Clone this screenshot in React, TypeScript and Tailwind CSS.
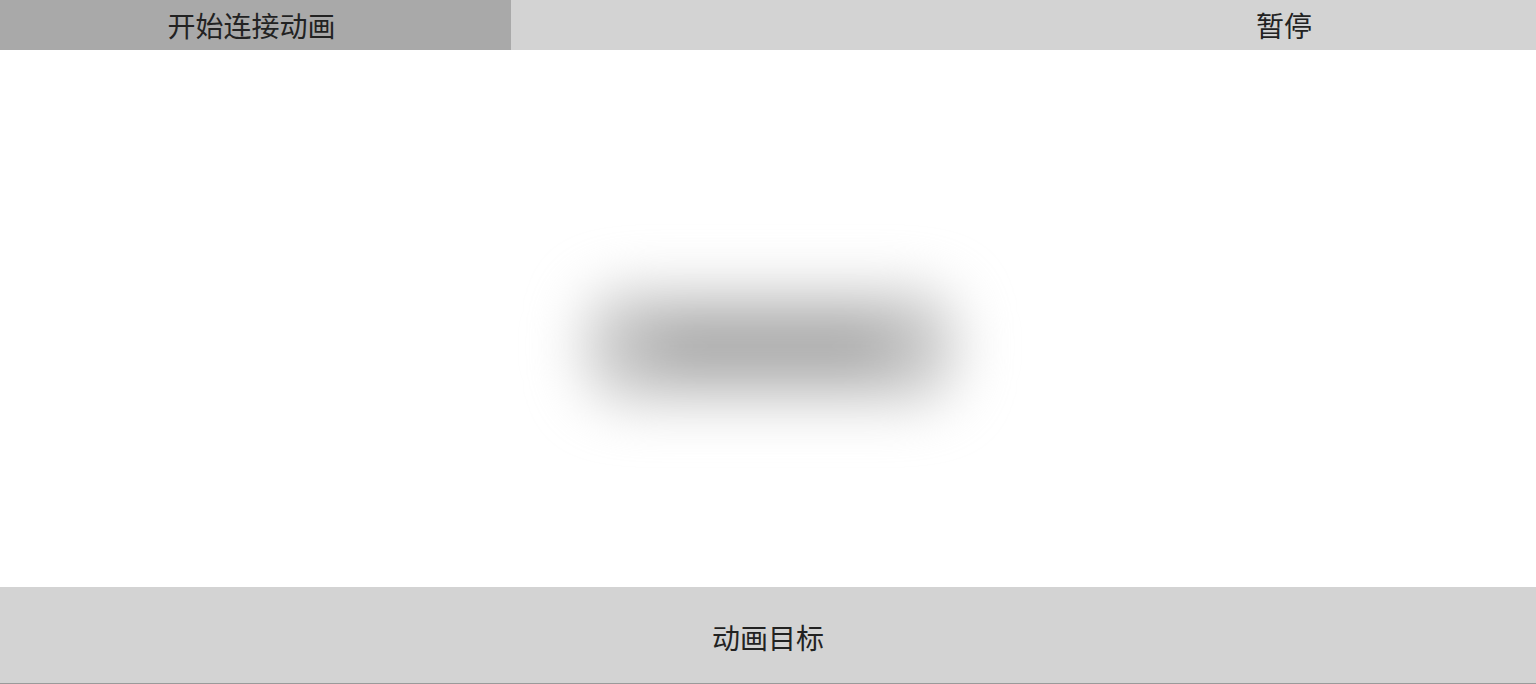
export default function App() {
  const font = { fontFamily: '"Noto Sans CJK SC", "Liberation Sans", sans-serif' };
  return (
    <div className="w-full h-[684px] bg-white flex flex-col overflow-hidden text-[#222]" style={font}>
      <div className="flex h-[50px] shrink-0">
        <button className="w-[511px] h-full bg-[#a9a9a9] text-[28px] leading-none flex items-center justify-center pr-2">
          开始连接动画
        </button>
        <button className="flex-1 h-full bg-[#d3d3d3]"></button>
        <button className="w-[504px] h-full bg-[#d3d3d3] text-[28px] leading-none flex items-center justify-center">
          暂停
        </button>
      </div>
      <div className="flex-1 flex justify-center pt-[241px] pl-1">
        <div className="w-[370px] h-[110px] bg-[#c9c9c9] rounded-[40px] blur-[28px] flex items-center justify-center">
          <div className="w-[250px] h-[46px] bg-[#a4a4a4] rounded-full"></div>
        </div>
      </div>
      <div className="h-[97px] shrink-0 bg-[#d3d3d3] border-b border-[#9a9a9a] flex items-center justify-center pt-1 text-[28px] leading-none">
        动画目标
      </div>
    </div>
  );
}
